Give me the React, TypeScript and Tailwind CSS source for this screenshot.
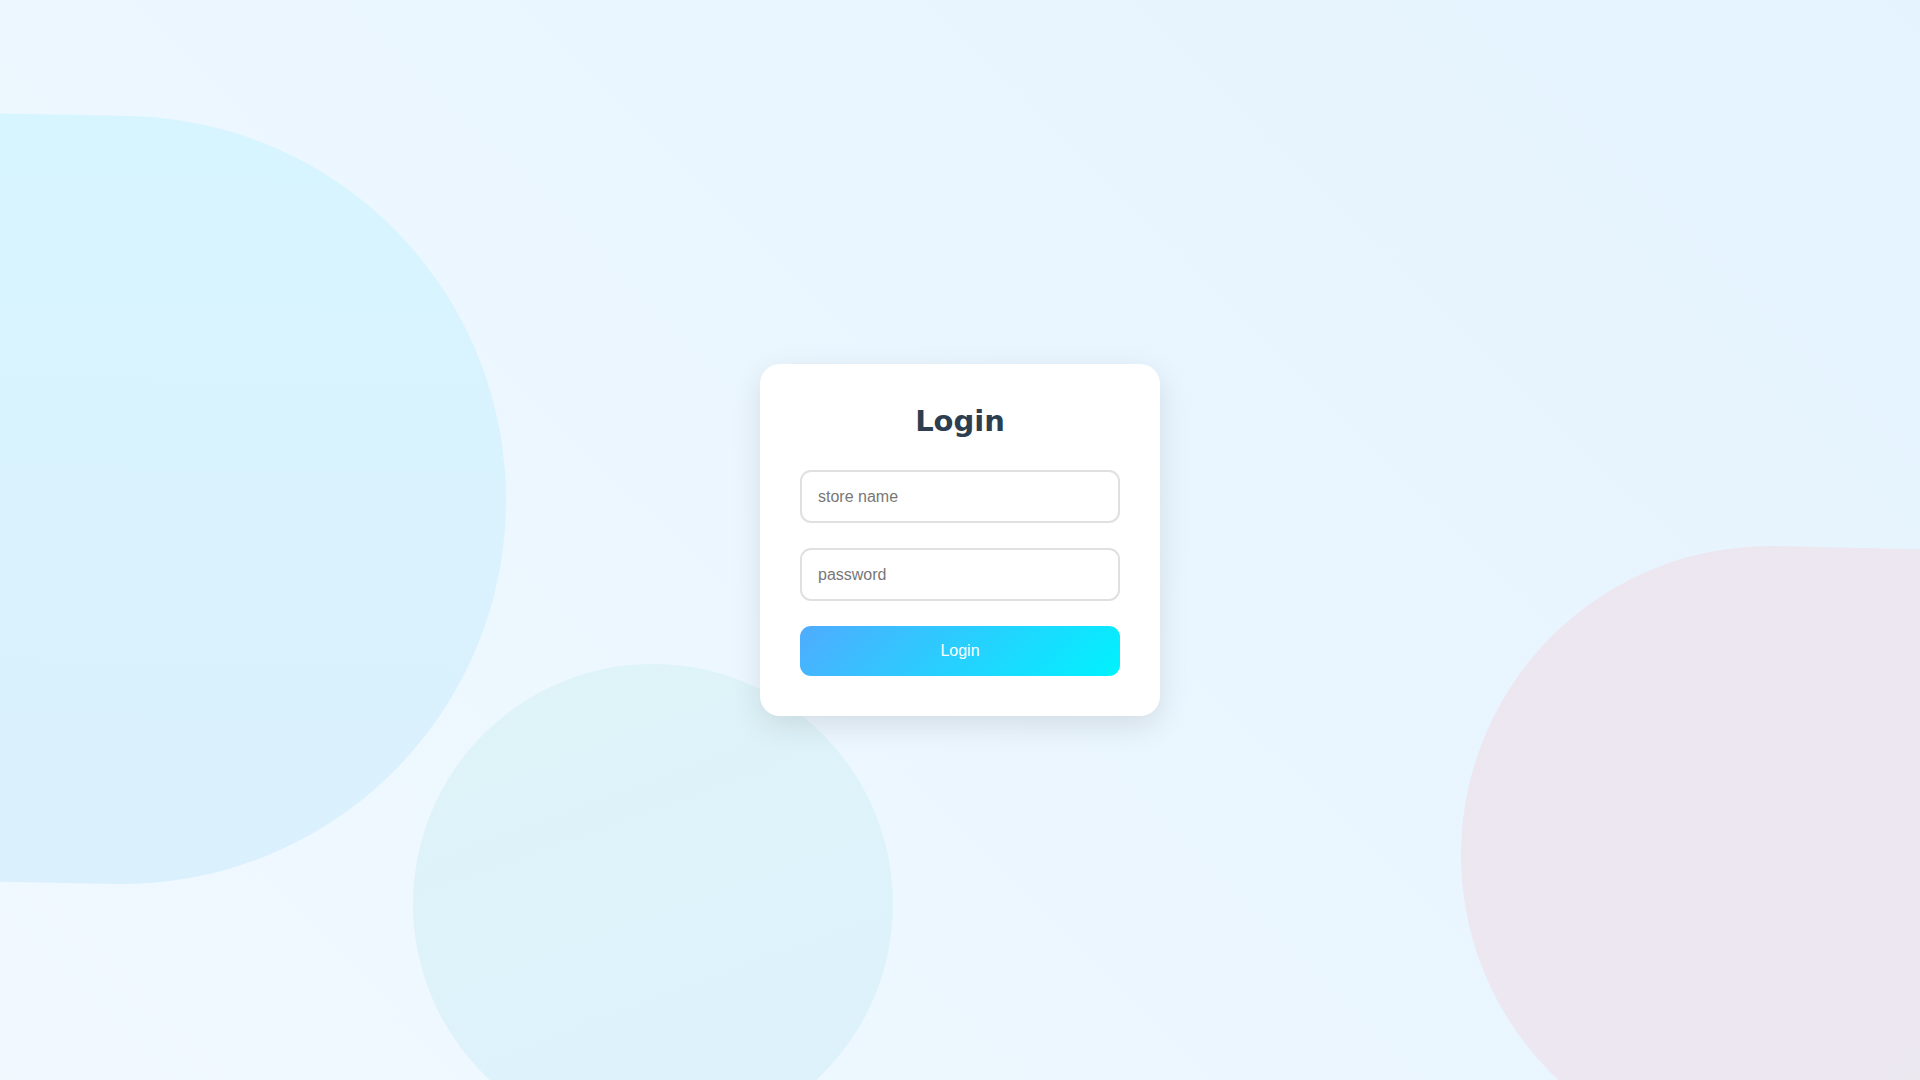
import React from "react";

export default function App() {
  return (
    <div className="relative w-full h-screen overflow-hidden bg-[linear-gradient(45deg,#f1f9ff,#e4f3fe)] flex items-center justify-center">
      <div className="absolute left-[-800px] top-[116px] w-[1306px] h-[768px] rounded-full origin-[922px_384px] rotate-[1.15deg] bg-[linear-gradient(180deg,#d7f5ff,#dbf0fd)]" />
      <div className="absolute left-[413px] top-[664px] w-[480px] h-[480px] rounded-full bg-[linear-gradient(160deg,#dff4f8,#dcf1fb)]" />
      <div className="absolute left-[1461px] top-[546px] w-[1000px] h-[618px] rounded-full origin-[309px_309px] rotate-[1.3deg] bg-[linear-gradient(135deg,#ede6f0,#ebe9f0)]" />

      <div className="relative w-[400px] bg-white rounded-[20px] p-[40px] shadow-[0_10px_30px_rgba(0,0,0,0.1)]">
        <h2 className="text-center text-[29px] leading-[35px] font-bold text-[#2c3e50] mb-[31px] font-['DejaVu_Sans',sans-serif]">
          Login
        </h2>
        <div className="flex flex-col gap-[25px] font-['Liberation_Sans',Arial,sans-serif]">
          <input
            type="text"
            placeholder="store name"
            className="w-full h-[53px] px-[16px] border-2 border-[#e0e0e0] rounded-[11px] text-[16px] outline-none placeholder:text-[#777777] bg-white"
          />
          <input
            type="password"
            placeholder="password"
            className="w-full h-[53px] px-[16px] border-2 border-[#e0e0e0] rounded-[11px] text-[16px] outline-none placeholder:text-[#777777] bg-white"
          />
          <button className="w-full h-[50px] rounded-[11px] text-white text-[16px] bg-[linear-gradient(135deg,#4facfe,#00f2fe)]">
            Login
          </button>
        </div>
      </div>
    </div>
  );
}
